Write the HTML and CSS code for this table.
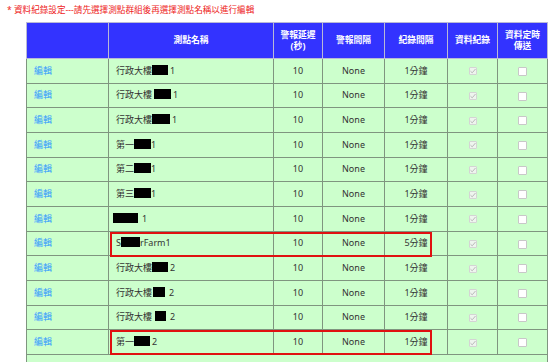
FILE: index.html
```html
<!DOCTYPE html>
<html lang="zh-Hant">
<head>
<meta charset="utf-8">
<title>資料紀錄設定</title>
<link rel="stylesheet" href="styles.css">
</head>
<body>
<p class="notice">* 資料紀錄設定---請先選擇測點群組後再選擇測點名稱以進行編輯</p>
<table class="grid">
  <colgroup>
    <col class="c-edit"><col class="c-name"><col class="c-delay"><col class="c-alarm"><col class="c-log"><col class="c-rec"><col class="c-send">
  </colgroup>
  <thead>
    <tr>
      <th></th>
      <th>測點名稱</th>
      <th>警報延遲<br>(秒)</th>
      <th>警報間隔</th>
      <th>紀錄間隔</th>
      <th>資料紀錄</th>
      <th>資料定時<br>傳送</th>
    </tr>
  </thead>
  <tbody>
    <tr><td class="edit"><a href="#">編輯</a></td><td class="name">行政大樓<span class="redact w16"></span><span class="gap"></span>1</td><td>10</td><td>None</td><td>1分鐘</td><td><span class="cb on"></span></td><td><span class="cb"></span></td></tr>
    <tr><td class="edit"><a href="#">編輯</a></td><td class="name">行政大樓<span class="redact w17 s2"></span><span class="gap"></span>1</td><td>10</td><td>None</td><td>1分鐘</td><td><span class="cb on"></span></td><td><span class="cb"></span></td></tr>
    <tr><td class="edit"><a href="#">編輯</a></td><td class="name">行政大樓<span class="redact w18"></span><span class="gap"></span>1</td><td>10</td><td>None</td><td>1分鐘</td><td><span class="cb on"></span></td><td><span class="cb"></span></td></tr>
    <tr><td class="edit"><a href="#">編輯</a></td><td class="name">第一<span class="redact w17"></span>1</td><td>10</td><td>None</td><td>1分鐘</td><td><span class="cb on"></span></td><td><span class="cb"></span></td></tr>
    <tr><td class="edit"><a href="#">編輯</a></td><td class="name">第二<span class="redact w17"></span>1</td><td>10</td><td>None</td><td>1分鐘</td><td><span class="cb on"></span></td><td><span class="cb"></span></td></tr>
    <tr><td class="edit"><a href="#">編輯</a></td><td class="name">第三<span class="redact w17"></span>1</td><td>10</td><td>None</td><td>1分鐘</td><td><span class="cb on"></span></td><td><span class="cb"></span></td></tr>
    <tr><td class="edit"><a href="#">編輯</a></td><td class="name"><span class="redact w25 lead"></span><span class="gap wide"></span>1</td><td>10</td><td>None</td><td>1分鐘</td><td><span class="cb on"></span></td><td><span class="cb"></span></td></tr>
    <tr><td class="edit"><a href="#">編輯</a></td><td class="name mark-cell">S<span class="redact w19"></span>rFarm1<span class="mark"></span></td><td>10</td><td>None</td><td>5分鐘</td><td><span class="cb on"></span></td><td><span class="cb"></span></td></tr>
    <tr><td class="edit"><a href="#">編輯</a></td><td class="name">行政大樓<span class="redact w16"></span><span class="gap"></span>2</td><td>10</td><td>None</td><td>1分鐘</td><td><span class="cb on"></span></td><td><span class="cb"></span></td></tr>
    <tr><td class="edit"><a href="#">編輯</a></td><td class="name">行政大樓<span class="redact w12 s1"></span><span class="gap wide"></span>2</td><td>10</td><td>None</td><td>1分鐘</td><td><span class="cb on"></span></td><td><span class="cb"></span></td></tr>
    <tr><td class="edit"><a href="#">編輯</a></td><td class="name">行政大樓<span class="redact w11 s3"></span><span class="gap wide"></span>2</td><td>10</td><td>None</td><td>1分鐘</td><td><span class="cb on"></span></td><td><span class="cb"></span></td></tr>
    <tr><td class="edit"><a href="#">編輯</a></td><td class="name mark-cell">第一<span class="redact w16"></span><span class="gap"></span>2<span class="mark"></span></td><td>10</td><td>None</td><td>1分鐘</td><td><span class="cb on"></span></td><td><span class="cb"></span></td></tr>
    <tr class="pager"><td colspan="7"></td></tr>
  </tbody>
</table>
</body>
</html>
```

FILE: styles.css
```css
html, body {
  margin: 0;
  padding: 0;
  background: #ffffff;
}

body {
  font-family: "Noto Sans", "Noto Sans CJK TC", sans-serif;
  font-size: 9px;
  color: #333333;
}

.notice {
  margin: 0;
  padding: 4px 0 0 7px;
  height: 22px;
  box-sizing: border-box;
  color: #ee2222;
  font-size: 8.6px;
  line-height: 12px;
}

.grid {
  margin-left: 26px;
  width: 521px;
  table-layout: fixed;
  border-collapse: collapse;
  background: #ccffcc;
}

.c-edit { width: 82px; }
.c-name { width: 165px; }
.c-delay { width: 49px; }
.c-alarm { width: 62px; }
.c-log { width: 63px; }
.c-rec { width: 50px; }
.c-send { width: 50px; }

.grid th {
  height: 35px;
  padding: 0;
  background: #3333ff;
  color: #ffffff;
  font-weight: bold;
  font-size: 8.8px;
  line-height: 11px;
  border: 1px solid #b9b9d6;
  text-align: center;
  vertical-align: middle;
}

.grid td {
  height: 23.67px;
  padding: 0;
  border: 1px solid #7f957f;
  text-align: center;
  vertical-align: middle;
  line-height: 12px;
  white-space: nowrap;
}

.grid td.edit {
  text-align: left;
  padding-left: 7px;
}

.grid td.edit a {
  color: #3399ff;
  text-decoration: none;
}

.grid td.name {
  text-align: left;
  padding-left: 7px;
}

.redact {
  display: inline-block;
  height: 10px;
  background: #000000;
  vertical-align: -1px;
}

.gap {
  display: inline-block;
  width: 2px;
}

.gap.wide {
  width: 4px;
}

.w11 { width: 11px; }
.w12 { width: 12px; }
.w16 { width: 16px; }
.w17 { width: 17px; }
.w18 { width: 18px; }
.w19 { width: 19px; }
.w25 { width: 25px; }
.s1 { margin-left: 1px; }
.s2 { margin-left: 2px; }
.s3 { margin-left: 3px; }
.lead { margin-left: -3px; }

.cb {
  display: inline-block;
  width: 9px;
  height: 9px;
  border: 1px solid #c8c8c8;
  background: #ffffff;
  vertical-align: middle;
  box-sizing: border-box;
  border-radius: 1px;
}

.cb.on {
  width: 8px;
  height: 8px;
  background: #eef5ee url("data:image/svg+xml,%3Csvg xmlns='http://www.w3.org/2000/svg' viewBox='0 0 8 8'%3E%3Cpath d='M1.5 4.2 L3.2 5.8 L6.5 2' fill='none' stroke='%23b8b8b8' stroke-width='1'/%3E%3C/svg%3E") center / 8px 8px no-repeat;
  border-color: #d4d4d4;
}

.mark-cell {
  position: relative;
}

.mark {
  position: absolute;
  left: 1px;
  top: 0;
  width: 322px;
  height: 25px;
  border: 2px solid #e01010;
  box-sizing: border-box;
  pointer-events: none;
}

.pager td {
  height: 30px;
}
```
